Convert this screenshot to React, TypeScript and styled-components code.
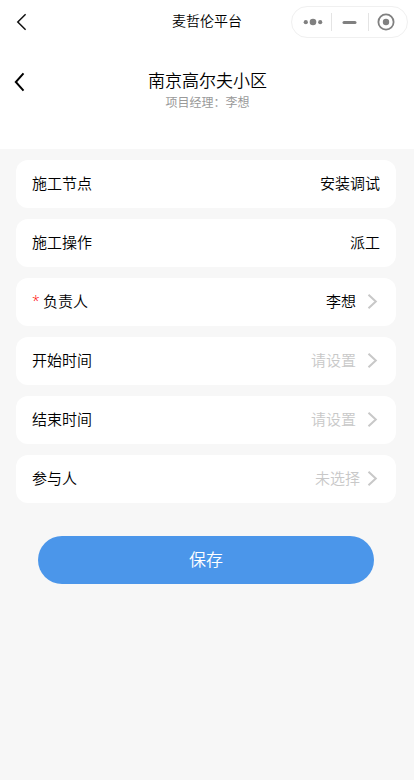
import React from "react";
import styled, { createGlobalStyle } from "styled-components";

const GlobalStyle = createGlobalStyle`
  * { box-sizing: border-box; }
  body {
    margin: 0;
    background: #f7f7f7;
    color: #000;
    font-family: "Noto Sans CJK SC", "Noto Sans", sans-serif;
  }
`;

const Page = styled.div`
  min-height: 780px;
  background: #f7f7f7;
`;

const Header = styled.header`
  height: 149px;
  background: #fff;
`;

const NavBar = styled.div`
  height: 44px;
  display: grid;
  grid-template-columns: 123px 1fr 123px;
  align-items: center;
`;

const NavBack = styled.button`
  width: 44px;
  height: 44px;
  padding: 0;
  border: 0;
  background: none;
  display: block;
`;

const NavTitle = styled.h1`
  margin: 0;
  font-size: 14px;
  line-height: 20px;
  font-weight: 350;
  text-align: center;
  padding-bottom: 4px;
`;

const Capsule = styled.div`
  width: 117px;
  height: 32px;
  border: 1px solid #f0f0f0;
  border-radius: 16px;
  display: flex;
  align-items: center;
`;

const ProjectBar = styled.div`
  height: 76px;
  display: grid;
  grid-template-columns: 44px 1fr 43px;
  align-items: center;
`;

const ProjectText = styled.div`
  padding-top: 15px;
  text-align: center;
`;

const ProjectName = styled.h2`
  margin: 0;
  font-size: 17px;
  line-height: 24px;
  font-weight: 350;
`;

const Manager = styled.p`
  margin: 1px 0 0;
  font-size: 12px;
  line-height: 18px;
  color: #999;
`;

const Form = styled.main`
  padding: 11px 18px 0 16px;
  display: flex;
  flex-direction: column;
  gap: 11px;
`;

const Row = styled.div`
  height: 48px;
  padding: 0 16px;
  border-radius: 12px;
  background: #fff;
  display: flex;
  align-items: center;
  justify-content: space-between;
  font-size: 15px;
  line-height: 22px;
  font-weight: 350;
`;

const Label = styled.span`
  display: flex;
  padding-bottom: 2px;
`;

const Required = styled.span`
  width: 11px;
  color: #f00;
  font-family: "Open Sans", sans-serif;
  font-size: 14px;
`;

const Value = styled.span<{ $empty?: boolean; $gap: number }>`
  display: flex;
  align-items: center;
  gap: ${(p) => p.$gap}px;
  color: ${(p) => (p.$empty ? "#c8c8c8" : "#000")};
`;

const ValueText = styled.span`
  padding-bottom: 2px;
`;

const SaveButton = styled.button`
  height: 48px;
  margin: 22px 22px 0;
  padding: 0 0 4px;
  border: 0;
  border-radius: 24px;
  background: #4b96ea;
  color: #fff;
  font-family: inherit;
  font-size: 17px;
  font-weight: 350;
`;

const Arrow = () => (
  <svg width="16" height="18" viewBox="0 0 16 18" fill="none">
    <path d="M4.5 1.7 11.8 8.5l-7.3 6.8" stroke="#c8c8c8" strokeWidth="2" />
  </svg>
);

type Item = {
  label: string;
  value: string;
  required?: boolean;
  empty?: boolean;
  arrow?: boolean;
  gap?: number;
};

const items: Item[] = [
  { label: "施工节点", value: "安装调试" },
  { label: "施工操作", value: "派工" },
  { label: "负责人", value: "李想", required: true, arrow: true },
  { label: "开始时间", value: "请设置", empty: true, arrow: true },
  { label: "结束时间", value: "请设置", empty: true, arrow: true },
  { label: "参与人", value: "未选择", empty: true, arrow: true, gap: 4 },
];

export default function App() {
  return (
    <Page>
      <GlobalStyle />
      <Header>
        <NavBar>
          <NavBack aria-label="返回">
            <svg width="44" height="44" fill="none">
              <path d="M25.6 14.3 17.8 22l7.8 7.7" stroke="#111" strokeWidth="1.5" />
            </svg>
          </NavBack>
          <NavTitle>麦哲伦平台</NavTitle>
          <Capsule>
            <svg width="115" height="30" fill="none">
              <g fill="#808080">
                <circle cx="13.8" cy="15.2" r="2.1" />
                <circle cx="21" cy="15" r="3.3" />
                <circle cx="28.2" cy="15.2" r="2.1" />
                <rect x="50.5" y="14" width="14" height="3" rx="1.5" />
                <circle cx="94" cy="15" r="3.2" />
              </g>
              <circle cx="94" cy="15" r="7.6" stroke="#808080" strokeWidth="1.8" />
              <path d="M39.5 6v18M76.5 6v18" stroke="#e4e4e4" />
            </svg>
          </Capsule>
        </NavBar>
        <ProjectBar>
          <NavBack aria-label="返回项目">
            <svg width="44" height="44" fill="none">
              <path d="M23.5 13.4 15.8 22l7.7 8.6" stroke="#000" strokeWidth="2" />
            </svg>
          </NavBack>
          <ProjectText>
            <ProjectName>南京高尔夫小区</ProjectName>
            <Manager>项目经理：李想</Manager>
          </ProjectText>
        </ProjectBar>
      </Header>
      <Form>
        {items.map((item) => (
          <Row key={item.label}>
            <Label>
              {item.required && <Required>*</Required>}
              {item.label}
            </Label>
            <Value $empty={item.empty} $gap={item.gap ?? 8}>
              <ValueText>{item.value}</ValueText>
              {item.arrow && <Arrow />}
            </Value>
          </Row>
        ))}
        <SaveButton>保存</SaveButton>
      </Form>
    </Page>
  );
}
